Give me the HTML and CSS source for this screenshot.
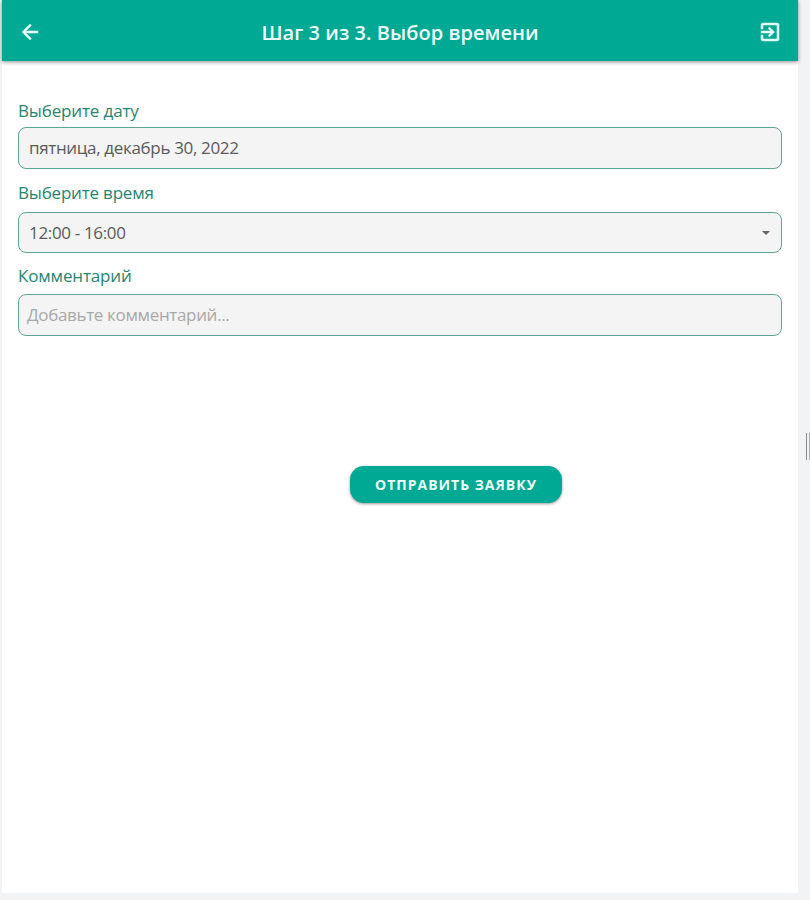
FILE: index.html
```html
<!DOCTYPE html>
<html lang="ru">
<head>
<meta charset="utf-8">
<title>Выбор времени</title>
<link rel="stylesheet" href="styles.css">
</head>
<body>
<div class="screen">
  <header class="bar">
    <svg class="icon" viewBox="0 0 24 24"><path d="M20 11H7.83l5.59-5.59L12 4l-8 8 8 8 1.41-1.41L7.83 13H20z"/></svg>
    <h1 class="title">Шаг 3 из 3. Выбор времени</h1>
    <svg class="icon" viewBox="0 0 24 24"><path d="M10.09 15.59L11.5 17l5-5-5-5-1.41 1.41L12.67 11H3v2h9.67zM19 3H5a2 2 0 0 0-2 2v4h2V5h14v14H5v-4H3v4a2 2 0 0 0 2 2h14a2 2 0 0 0 2-2V5a2 2 0 0 0-2-2z"/></svg>
  </header>
  <main class="form">
    <div class="label">Выберите дату</div>
    <div class="field">пятница, декабрь 30, 2022</div>
    <div class="label label-time">Выберите время</div>
    <div class="field field-time">12:00 - 16:00<i class="caret"></i></div>
    <div class="label label-comment">Комментарий</div>
    <div class="field hint">Добавьте комментарий...</div>
    <button class="submit">ОТПРАВИТЬ ЗАЯВКУ</button>
  </main>
</div>
<i class="handle"></i>
</body>
</html>
```
FILE: styles.css
```css
* { box-sizing: border-box; }
body {
  margin: 0;
  height: 900px;
  display: flex;
  align-items: flex-start;
  overflow: hidden;
  background: #f2f3f5;
  font-family: "Open Sans", "Noto Sans", sans-serif;
}
.screen {
  width: 796px;
  height: 893px;
  margin-left: 2px;
  background: #fff;
}
.bar {
  height: 61px;
  padding: 4px 16px 0;
  display: flex;
  align-items: center;
  justify-content: space-between;
  background: #00a994;
  box-shadow: 0 1px 4px rgba(0, 0, 0, .45);
}
.icon {
  width: 24px;
  height: 24px;
  margin-bottom: 2px;
  fill: #e6fffa;
  stroke: #e6fffa;
  stroke-width: .5;
}
.title { margin: 0; color: #effffc; font-size: 20px; font-weight: 600; letter-spacing: .04px; white-space: nowrap; }
.form {
  padding: 38px 16px 0;
  display: flex;
  flex-direction: column;
  font-size: 17px;
}
.label { height: 28px; line-height: 24px; color: #26856e; letter-spacing: -.15px; white-space: nowrap; }
.label-time { height: 31px; letter-spacing: -.2px; }
.label-comment { height: 30px; }
.field {
  height: 42px;
  margin-bottom: 12px;
  padding: 0 11px 1px 10px;
  display: flex;
  align-items: center;
  justify-content: space-between;
  border: 1px solid #5fa595;
  border-radius: 8px;
  background: #f4f4f4;
  color: #5a5a5a;
  letter-spacing: -.34px;
  white-space: nowrap;
}
.field-time { height: 41px; margin-bottom: 11px; padding-bottom: 0; }
.hint { padding-left: 8px; color: #a8a8a8; }
.caret { border: 4px solid transparent; border-top-color: #666; border-bottom: 0; }
.submit {
  width: 212px;
  height: 37px;
  margin: 118px 0 0 332px;
  padding: 0;
  border: 0;
  border-radius: 14px;
  background: #00a994;
  box-shadow: 0 1px 3px rgba(0, 0, 0, .4);
  color: #effffc;
  font: 700 14px "Open Sans", sans-serif;
  letter-spacing: 1px;
  white-space: nowrap;
}
.handle {
  width: 4px;
  height: 27px;
  margin: 433px 0 0 8px;
  border-left: 1px solid #8a8a8a;
  border-right: 1px solid #b0b0b0;
}
```
